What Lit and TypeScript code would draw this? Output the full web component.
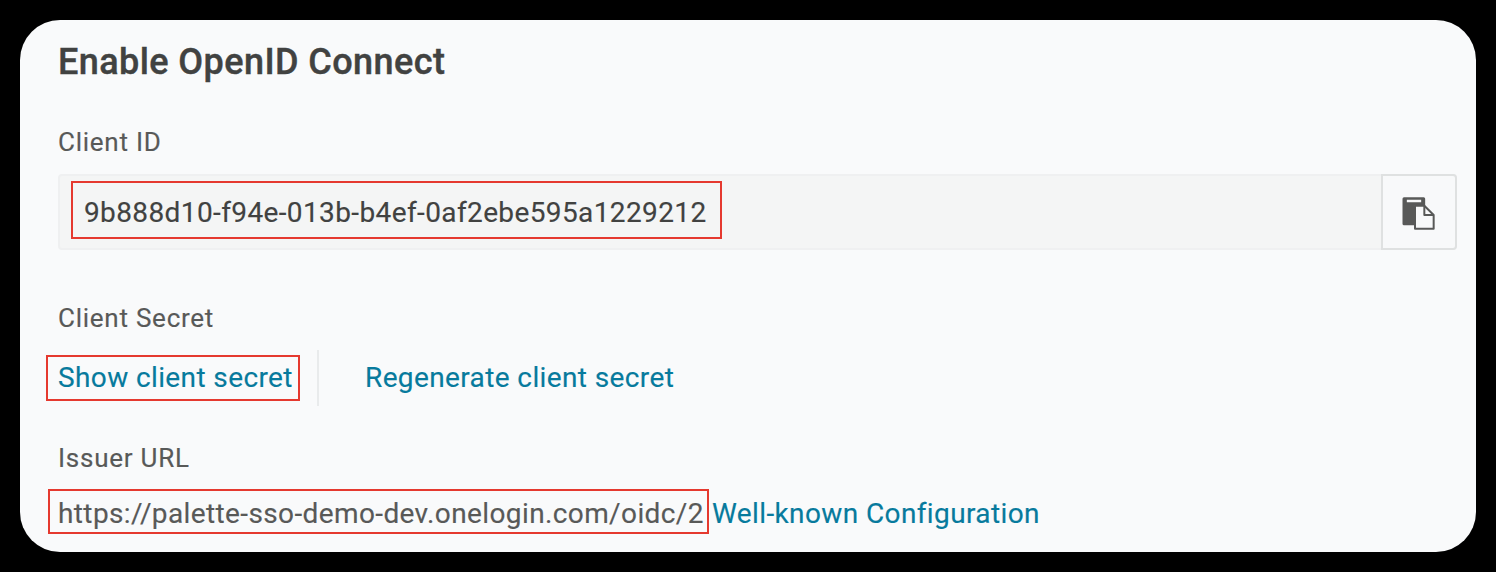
import { LitElement, html, css } from "lit";
import { customElement } from "lit/decorators.js";

@customElement("app-root")
export class AppRoot extends LitElement {
  static styles = css`
    :host { display: block; height: 572px; box-sizing: border-box; padding: 20px; background: #000; font-family: Roboto, sans-serif; color: #585958; font-size: 28px; line-height: 32px; letter-spacing: 0.385px; -webkit-text-stroke: 0.15px currentColor; }
    * { box-sizing: border-box; }
    .card { height: 532px; background: #f9fafb; border-radius: 40px; padding: 20px 19px 0 38px; overflow: hidden; }
    h1 { margin: 0; font-size: 36px; font-weight: 500; line-height: 44px; color: #414241; letter-spacing: 0.42px; white-space: nowrap; -webkit-text-stroke: 0.4px #414241; }
    .label { font-size: 26px; letter-spacing: 0.75px; margin-top: 42px; }
    .label.secret { margin-top: 52px; }
    .label.issuer { margin-top: 36px; }
    .field { display: flex; margin-top: 16px; height: 76px; width: 1399px; border: 2px solid #eff0f1; border-radius: 4px; background: #f4f5f5; align-items: flex-start; padding: 5px 0 0 11px; }
    .mark { border: 2px solid #e5392f; white-space: nowrap; }
    .id { width: 651px; height: 58px; line-height: 56px; padding: 2px 0 0 11px; color: #414241; }
    .copy { margin: -7px -2px -2px auto; width: 76px; height: 76px; border: 2px solid #dfe1e1; background: #f8f9fa; border-radius: 0 4px 4px 0; padding: 3px 2px 0 0; display: grid; place-items: center; }
    .copy svg { display: block; }
    .row { display: flex; white-space: nowrap; }
    .actions { margin-top: 16px; height: 56px; align-items: flex-start; }
    .show { margin: 5px 0 0 -12px; width: 254px; height: 46px; line-height: 41px; padding-left: 10px; }
    .divider { width: 2px; height: 56px; background: #e9ebec; margin-left: 17px; }
    .regen { margin: 4px 0 0 46px; line-height: 47px; }
    .url { margin: 15px 0 0 -10px; }
    .issuer-url { width: 661px; height: 45px; line-height: 45px; padding-left: 8px; }
    .well { line-height: 49px; margin-left: 3px; }
    .link { color: #077a9d; }
    .show, .issuer-url, .id { flex: none; }
  `;
  render() {
    return html`<main class="card">
      <h1>Enable OpenID Connect</h1>
      <div class="label">Client ID</div>
      <div class="field">
        <div class="mark id">9b888d10-f94e-013b-b4ef-0af2ebe595a1229212</div>
        <button class="copy" aria-label="Copy">
          <svg width="33" height="33" viewBox="96 96 99 99">
            <path fill="#585958" fill-rule="evenodd" d="M102 97H161Q165.500 97 165.500 101.500V122H132V180.500H102Q97.500 180.500 97.500 176V101.500Q97.500 97 102 97ZM110.500 104.500V111.500H153.500V104.500Z"/>
            <path fill="#f8f9fa" stroke="#585958" stroke-width="6" stroke-linejoin="round" d="M135 122.500H163L191 150V191H135Z"/>
            <path fill="none" stroke="#585958" stroke-width="6" stroke-linejoin="round" d="M163 122.500V150H191"/>
          </svg>
        </button>
      </div>
      <div class="label secret">Client Secret</div>
      <div class="row actions">
        <span class="mark show link">Show client secret</span>
        <span class="divider"></span>
        <span class="link regen">Regenerate client secret</span>
      </div>
      <div class="label issuer">Issuer URL</div>
      <div class="row url">
        <span class="mark issuer-url">https://palette-sso-demo-dev.onelogin.com/oidc/2</span>
        <span class="link well">Well-known Configuration</span>
      </div>
    </main>`;
  }
}
